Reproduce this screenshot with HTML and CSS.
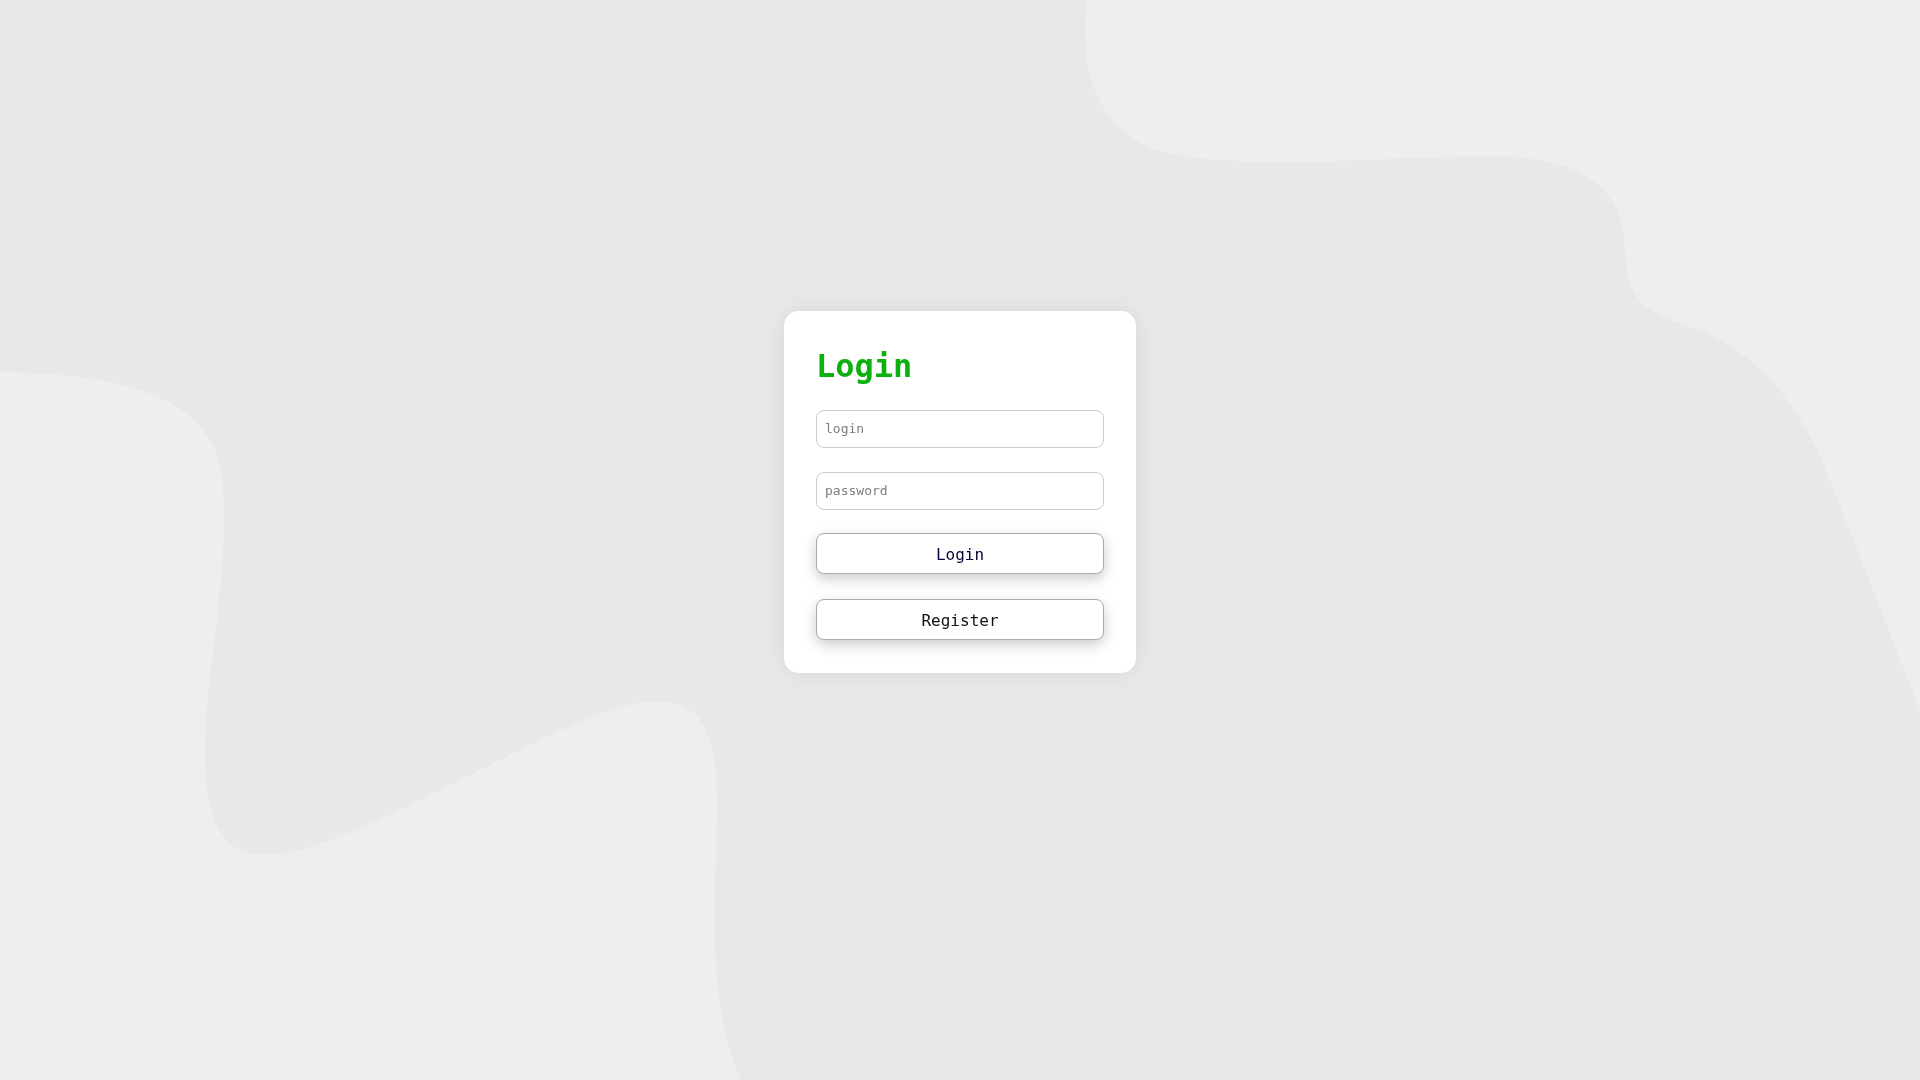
FILE: index.html
```html
<!DOCTYPE html>
<html lang="en">
<head>
<meta charset="utf-8">
<title>Login</title>
<link rel="stylesheet" href="styles.css">
</head>
<body>
<svg class="bg" viewBox="0 0 1920 1080" preserveAspectRatio="none" aria-hidden="true">
  <path class="blob" d="M1087,0 C1080,60 1090,120 1150,148 C1210,170 1350,160 1470,156 C1560,153 1620,175 1624,240 C1628,290 1630,305 1680,323 C1740,343 1790,380 1830,480 L1920,710 L1920,0 Z"/>
  <path class="blob" d="M0,372 C120,374 190,395 215,450 C232,490 222,580 212,660 C200,760 200,830 240,850 C290,870 380,820 500,760 C580,720 640,690 680,705 C720,720 718,780 716,850 C712,950 715,1020 741,1080 L0,1080 Z"/>
</svg>
<main class="card">
  <h1 class="title">Login</h1>
  <form class="form">
    <input class="field" type="text" placeholder="login">
    <input class="field" type="password" placeholder="password">
    <button class="btn btn-login" type="button">Login</button>
    <button class="btn btn-register" type="button">Register</button>
  </form>
</main>
</body>
</html>
```
FILE: styles.css
```css
html, body {
  margin: 0;
  height: 100%;
}
body {
  background: #e8e8e8;
  font-family: "DejaVu Sans Mono", "Liberation Mono", monospace;
  display: flex;
  justify-content: center;
  align-items: flex-start;
  padding-top: 311px;
  box-sizing: border-box;
  overflow: hidden;
}
.bg {
  position: fixed;
  inset: 0;
  width: 100%;
  height: 100%;
  z-index: 0;
}
.blob {
  fill: #eeeeee;
}
.card {
  position: relative;
  z-index: 1;
  width: 352px;
  box-sizing: border-box;
  padding: 32px 32px 33px;
  background: #ffffff;
  border-radius: 15px;
  box-shadow: 0 0 22px rgba(0, 0, 0, 0.08);
}
.title {
  margin: 3px 0 24px;
  font-size: 32px;
  line-height: 40px;
  font-weight: bold;
  color: #0db10d;
}
.form {
  display: flex;
  flex-direction: column;
}
.field {
  height: 38px;
  box-sizing: border-box;
  border: 1px solid #cccccc;
  border-radius: 8px;
  padding: 0 8px 1px;
  font-family: inherit;
  font-size: 13px;
  color: #333;
  outline: none;
  margin: 0 0 24px;
}
.field + .field {
  margin-bottom: 23px;
}
.field::placeholder {
  color: #7d7d7d;
}
.btn {
  height: 41px;
  box-sizing: border-box;
  border: 1px solid #aaaaaa;
  border-radius: 8px;
  background: #ffffff;
  font-family: inherit;
  font-size: 16px;
  color: #111;
  padding: 2px 0 0;
  box-shadow: 0 5px 14px rgba(0, 0, 0, 0.2);
  cursor: pointer;
}
.btn-login {
  color: #06063a;
  margin-bottom: 25px;
}
```
